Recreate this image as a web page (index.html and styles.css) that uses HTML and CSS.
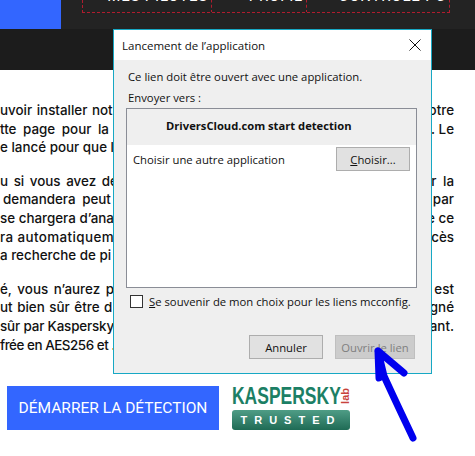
FILE: index.html
```html
<!DOCTYPE html>
<html lang="fr">
<head>
<meta charset="utf-8">
<title>Détection</title>
<link rel="stylesheet" href="styles.css">
</head>
<body>
<header class="header">
  <div class="nav-band">
    <div class="brand"></div>
    <nav class="nav">
      <a class="nav-item nav-a">MES PILOTES</a>
      <a class="nav-item nav-b">PROFIL</a>
      <a class="nav-item nav-c">CONTRÔLE PC</a>
    </nav>
  </div>
  <div class="sub-band"></div>
</header>
<main class="content">
  <div class="para">
    <div class="line"><span class="left ws1">uvoir installer not</span><span class="right">otre</span></div>
    <div class="line"><span class="left ws3">tte page pour la</span><span class="right">. Le</span></div>
    <div class="line"><span class="left">e lancé pour que l</span></div>
  </div>
  <div class="para">
    <div class="line"><span class="left ws2">u si vous avez déj</span><span class="right ws3">r la</span></div>
    <div class="line"><span class="left ws3 ind">demandera peut</span><span class="right">par</span></div>
    <div class="line"><span class="left">se chargera d’ana</span><span class="right">e ce</span></div>
    <div class="line"><span class="left loose">ra automatiquem</span><span class="right">ccès</span></div>
    <div class="line"><span class="left">a recherche de pi</span></div>
  </div>
  <div class="para">
    <div class="line"><span class="left ws2">é, vous n’aurez p</span><span class="right">est</span></div>
    <div class="line"><span class="left ws1">ut bien sûr être d</span><span class="right">gné</span></div>
    <div class="line"><span class="left tight">sûr par Kaspersky.</span><span class="right">ant.</span></div>
    <div class="line"><span class="left tighter">frée en AES256 et .</span></div>
  </div>
  <div class="actions">
    <a class="start">DÉMARRER LA DÉTECTION</a>
    <div class="logo">
      <div class="logo-top"><span class="logo-name">KASPERSKY</span><span class="logo-lab">lab</span></div>
      <div class="logo-badge">TRUSTED</div>
    </div>
  </div>
</main>

<section class="dialog">
  <div class="dialog-title">
    <span>Lancement de l’application</span>
    <svg class="close" width="12" height="12" viewBox="0 0 12 12"><path d="M.5.5l11 11M11.5.5l-11 11" stroke="#111" stroke-width="1" fill="none"/></svg>
  </div>
  <div class="dialog-body">
    <p class="msg">Ce lien doit être ouvert avec une application.</p>
    <p class="msg">Envoyer vers :</p>
    <div class="list">
      <div class="list-head">DriversCloud.com start detection</div>
      <div class="list-row">
        <span>Choisir une autre application</span>
        <button class="btn btn-choose"><u>C</u>hoisir...</button>
      </div>
    </div>
    <label class="remember"><span class="check"></span><span><u>S</u>e souvenir de mon choix pour les liens mcconfig.</span></label>
    <div class="dialog-actions">
      <button class="btn btn-cancel">Annuler</button>
      <button class="btn btn-open">Ouvrir le lien</button>
    </div>
  </div>
</section>

<svg class="arrow" width="475" height="456" viewBox="0 0 475 456">
  <path d="M413 438C405 421 394 398 384 376L378 351M378 351L379 378M378 351L404 373" fill="none" stroke="#0000ee" stroke-width="7" stroke-linecap="round" stroke-linejoin="round"/>
</svg>
</body>
</html>
```
FILE: styles.css
```css
* { box-sizing: border-box; }
html, body { margin: 0; padding: 0; }
body {
  width: 475px;
  height: 456px;
  overflow: hidden;
  position: relative;
  background: #fff;
  font-family: "Inter", "Liberation Sans", sans-serif;
  color: #111;
}
.header { display: flex; flex-direction: column; }
.nav-band { height: 29px; background: #232323; display: flex; }
.brand { width: 61px; background: #3366ff; }
.nav {
  margin-left: 21px;
  height: 13px;
  display: flex;
  overflow: hidden;
  border-bottom: 1px dashed #b01c2e;
  border-left: 1px dashed #b01c2e;
}
.nav-item {
  display: block;
  flex: none;
  color: #fff;
  font: 15px/14px "Roboto", sans-serif;
  margin-top: -11px;
  height: 24px;
  text-align: right;
  border-right: 1px dashed #b01c2e;
  padding-right: 3px;
  letter-spacing: .8px;
}
.nav-a { width: 129px; }
.nav-b { width: 95px; }
.nav-c { width: 143px; }
.sub-band { height: 41px; background: #1c1c1c; }
.content { padding-top: 31px; }
.para { margin-bottom: 15px; }
.line {
  height: 18.6px;
  display: flex;
  justify-content: space-between;
  font-size: 13.4px;
  font-weight: 500;
  line-height: 18.6px;
  padding-right: 21px;
  white-space: nowrap;
}
.left { width: 113px; overflow: hidden; }
.right { margin-left: auto; }
.ws1 { word-spacing: 1px; }
.ws2 { word-spacing: 2px; }
.ws3 { word-spacing: 3px; }
.ind { padding-left: 3px; }
.loose { letter-spacing: .4px; }
.tight { letter-spacing: -.15px; }
.tighter { letter-spacing: -.45px; }
.actions { display: flex; align-items: flex-start; padding-left: 7px; gap: 13px; margin-top: 32px; }
.start {
  width: 212px;
  height: 44px;
  background: #3366ff;
  color: #fff;
  font: 15.5px/44px "Roboto", sans-serif;
  text-align: center;
}
.logo { width: 118px; margin-top: -2px; display: flex; flex-direction: column; gap: 2px; }
.logo-top { display: flex; align-items: center; justify-content: space-between; height: 24px; }
.logo-name {
  flex: none;
  width: 109px;
  transform: scaleX(.76);
  transform-origin: left center;
  font: 700 23px/24px "Liberation Sans", sans-serif;
  color: #1c7f65;
  white-space: nowrap;
}
.logo-lab {
  writing-mode: vertical-rl;
  transform: rotate(180deg);
  font: 700 11px/9px "Liberation Sans", sans-serif;
  color: #c8433c;
}
.logo-badge {
  height: 20px;
  border-radius: 3px;
  background: linear-gradient(#4f9d86, #1f6b55);
  color: #fff;
  font: 700 11px/20px "Liberation Sans", sans-serif;
  letter-spacing: 7px;
  text-align: center;
}
.dialog {
  position: absolute;
  left: 113px;
  top: 29px;
  width: 319px;
  height: 345px;
  border: 1px solid #17a8c4;
  background: #efefef;
  font-family: "Open Sans", sans-serif;
  font-size: 11.3px;
  display: flex;
  flex-direction: column;
  color: #111;
}
.dialog-title {
  height: 30px;
  background: #fff;
  display: flex;
  align-items: center;
  justify-content: space-between;
  padding: 0 10px 0 8px;
  font-size: 11.5px;
  flex: none;
}
.dialog-body { flex: 1; padding: 6px 14px 0 12px; display: flex; flex-direction: column; }
.msg { margin: 0; height: 21px; line-height: 21px; padding-left: 2px; flex: none; }
.list {
  height: 180px;
  border: 1px solid #8a8d96;
  background: #fff;
  flex: none;
}
.list-head {
  height: 36px;
  background: #efefef;
  font-weight: 700;
  font-size: 11.2px;
  line-height: 34px;
  padding-left: 39px;
}
.list-row {
  display: flex;
  align-items: center;
  justify-content: space-between;
  padding: 2px 6px 0 6px;
}
.btn {
  font: 11.3px "Open Sans", sans-serif;
  color: #111;
  background: #e1e1e1;
  border: 1px solid #adadad;
  padding: 0;
  height: 24px;
}
.btn-choose { width: 74px; }
.remember { display: flex; align-items: center; gap: 6px; margin: 6px 0 0 4px; height: 15px; flex: none; }
.check { width: 13px; height: 13px; border: 1px solid #333; background: #fff; flex: none; }
.dialog-actions { display: flex; justify-content: flex-end; gap: 12px; margin-top: 26px; padding-right: 2px; }
.btn-cancel { width: 74px; }
.btn-open { width: 80px; background: #cccccc; color: #7f7f7f; border-color: #bfbfbf; }
.arrow { position: absolute; left: 0; top: 0; pointer-events: none; }
```
